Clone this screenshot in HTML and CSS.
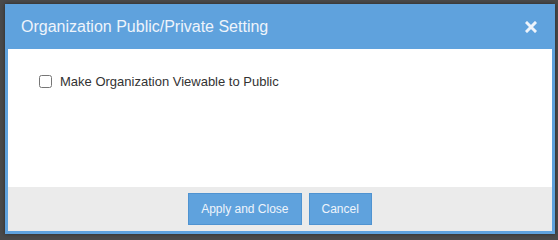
FILE: index.html
```html
<!DOCTYPE html>
<html lang="en">
<head>
  <meta charset="UTF-8" />
  <title>Organization Public/Private Setting</title>
  <link rel="stylesheet" href="styles.css">
</head>
<body>

  <div class="dialog">
    <div class="dialog-header">
      <span class="dialog-title">Organization Public/Private Setting</span>
      <span class="dialog-close" title="Close">
        <svg width="12" height="12" viewBox="0 0 12 12">
          <path d="M2 2 L10 10 M10 2 L2 10" stroke="#eef4fb" stroke-width="3" stroke-linecap="square" />
        </svg>
      </span>
    </div>

    <div class="dialog-body">
      <label class="check-row">
        <input type="checkbox" id="publicView" />
        <span>Make Organization Viewable to Public</span>
      </label>
    </div>

    <div class="dialog-footer">
      <button class="btn">Apply and Close</button>
      <button class="btn">Cancel</button>
    </div>
  </div>

</body>
</html>
```

FILE: styles.css
```css
body {
  margin: 0;
  font-family: 'Liberation Sans', Arial, sans-serif;
  background: #4a4a4a;
  height: 240px;
  overflow: hidden;
}

.dialog {
  margin: 4px 3px 0 5px;
  width: 544px;
  height: 227px;
  border: 3px solid #5fa2dd;
  border-top: 0;
  background: white;
  display: flex;
  flex-direction: column;
  box-shadow: 0 0 4px rgba(0,0,0,0.45);
}

.dialog-header {
  background: #5fa2dd;
  height: 45px;
  flex-shrink: 0;
  margin: 0 -3px;
  padding: 0 18px 0 16px;
  display: flex;
  align-items: center;
  justify-content: space-between;
}

.dialog-title {
  color: #eef4fb;
  font-size: 16px;
}

.dialog-close {
  width: 12px;
  height: 12px;
  display: flex;
  cursor: pointer;
}

.dialog-body {
  flex: 1;
  padding: 25px 31px 0;
}

.check-row {
  display: flex;
  align-items: center;
  gap: 8px;
  font-size: 13px;
  color: #333;
}

.check-row input {
  margin: 0;
  width: 13px;
  height: 13px;
}

.dialog-footer {
  background: #ebebeb;
  height: 44px;
  flex-shrink: 0;
  display: flex;
  justify-content: center;
  align-items: center;
  gap: 7px;
}

.btn {
  height: 32px;
  padding: 0 12px;
  background-color: #5fa2dd;
  border: 1px solid #4f93d1;
  color: #eef4fb;
  font-family: 'Liberation Sans', Arial, sans-serif;
  font-size: 12px;
  cursor: pointer;
}

.btn:hover {
  background-color: #4f93d1;
}
```
